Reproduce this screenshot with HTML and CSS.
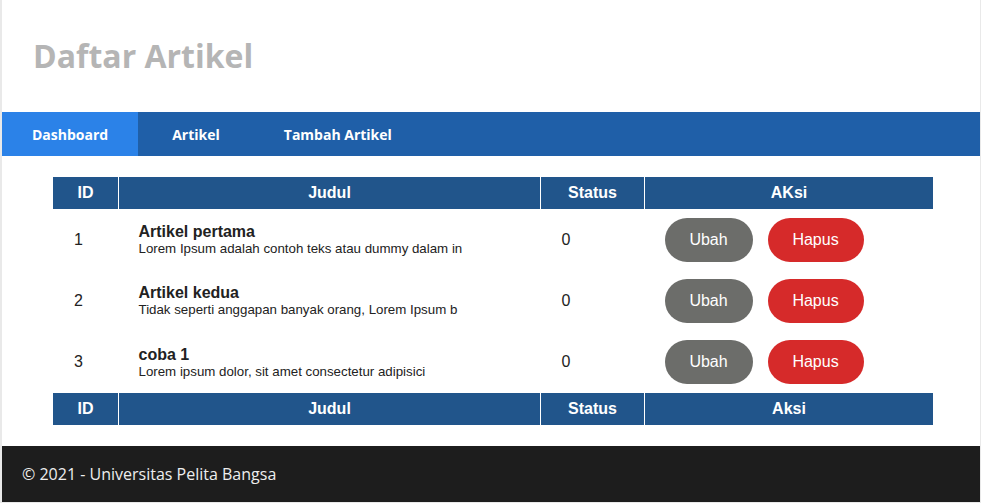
FILE: index.html
```html
<!DOCTYPE html>
<html lang="id">
<head>
<meta charset="utf-8">
<title>Daftar Artikel</title>
<link rel="stylesheet" href="styles.css">
</head>
<body>
<div class="container">
  <header class="header">
    <h1 class="title">Daftar Artikel</h1>
  </header>
  <nav class="nav">
    <a class="nav-link active" href="#">Dashboard</a>
    <a class="nav-link" href="#">Artikel</a>
    <a class="nav-link" href="#">Tambah Artikel</a>
  </nav>
  <main class="content">
    <table class="table">
      <thead>
        <tr><th class="c-id">ID</th><th class="c-judul">Judul</th><th class="c-status">Status</th><th class="c-aksi">AKsi</th></tr>
      </thead>
      <tbody>
        <tr>
          <td>1</td>
          <td><div class="art-title">Artikel pertama</div><div class="art-desc">Lorem Ipsum adalah contoh teks atau dummy dalam in</div></td>
          <td>0</td>
          <td><a class="btn btn-ubah" href="#">Ubah</a><a class="btn btn-hapus" href="#">Hapus</a></td>
        </tr>
        <tr>
          <td>2</td>
          <td><div class="art-title">Artikel kedua</div><div class="art-desc">Tidak seperti anggapan banyak orang, Lorem Ipsum b</div></td>
          <td>0</td>
          <td><a class="btn btn-ubah" href="#">Ubah</a><a class="btn btn-hapus" href="#">Hapus</a></td>
        </tr>
        <tr class="row-last">
          <td>3</td>
          <td><div class="art-title">coba 1</div><div class="art-desc">Lorem ipsum dolor, sit amet consectetur adipisici</div></td>
          <td>0</td>
          <td><a class="btn btn-ubah" href="#">Ubah</a><a class="btn btn-hapus" href="#">Hapus</a></td>
        </tr>
      </tbody>
      <tfoot>
        <tr><th>ID</th><th>Judul</th><th>Status</th><th>Aksi</th></tr>
      </tfoot>
    </table>
  </main>
  <footer class="footer">&copy; 2021 - Universitas Pelita Bangsa</footer>
</div>
</body>
</html>
```
FILE: styles.css
```css
html, body {
  margin: 0;
  padding: 0;
  background: #e9e9e9;
}
body {
  font-family: "Open Sans", sans-serif;
}
.container {
  width: 978px;
  margin-left: 2px;
  background: #fff;
}
.header {
  height: 112px;
  display: flex;
  align-items: center;
  padding: 0 31px;
  box-sizing: border-box;
}
.title {
  margin: 0;
  font-size: 32px;
  font-weight: 700;
  color: #b5b5b5;
  line-height: 1;
}
.nav {
  display: flex;
  gap: 4px;
  background: #1f5fa8;
  height: 44px;
}
.nav-link {
  display: flex;
  align-items: center;
  padding: 0 30px;
  color: #fff;
  font-weight: 700;
  font-size: 14px;
  text-decoration: none;
}
.nav-link.active {
  background: #2b82e8;
}
.content {
  padding: 21px 0 21px 51px;
}
.table {
  width: 880px;
  border-collapse: collapse;
  font-family: "Liberation Sans", Arial, sans-serif;
  font-size: 16px;
  color: #222;
}
.table th {
  background: #21558b;
  color: #fff;
  font-weight: 700;
  height: 32px;
  padding: 0;
  text-align: center;
  border-left: 1px solid #fff;
}
.table th:first-child {
  border-left: 0;
}
.c-id { width: 65px; }
.c-judul { width: 421px; }
.c-status { width: 103px; }
.table td {
  height: 61px;
  padding: 0 20px 0 21px;
  vertical-align: middle;
  text-align: left;
  box-sizing: border-box;
}
.table td:nth-child(2),
.table td:nth-child(4) {
  padding-left: 20px;
}
.row-last td {
  height: 62px;
}
.art-title {
  font-weight: 700;
  font-size: 16px;
  line-height: 18px;
  color: #222;
}
.art-desc {
  font-size: 13.3px;
  line-height: 15px;
  color: #222;
}
.btn {
  display: inline-flex;
  align-items: center;
  justify-content: center;
  height: 44px;
  border-radius: 22px;
  color: #fff;
  text-decoration: none;
  font-size: 16px;
  vertical-align: middle;
}
.btn-ubah {
  width: 88px;
  background: #6c6d6a;
  margin-right: 15px;
}
.btn-hapus {
  width: 96px;
  background: #d62a2a;
}
.footer {
  background: #1d1d1d;
  color: #eee;
  font-size: 16px;
  line-height: 22px;
  padding: 17px 20px;
}
```
